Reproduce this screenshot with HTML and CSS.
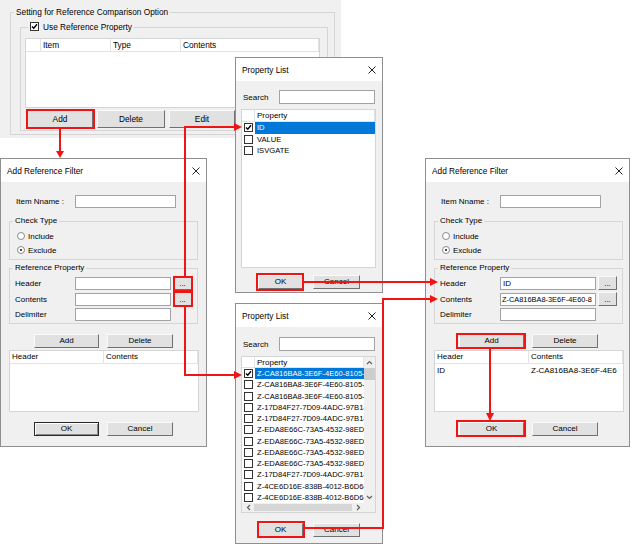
FILE: index.html
```html
<!DOCTYPE html>
<html lang="en">
<head>
  <meta charset="UTF-8">
  <meta name="viewport" content="width=device-width, initial-scale=1">
  <title>Reference Filter</title>
  <link rel="stylesheet" href="styles.css">
</head>
<body>

<div class="canvas">

  <!-- option page behind the dialogs -->
  <div class="panel">
    <fieldset class="group outer">
      <legend>Setting for Reference Comparison Option</legend>
      <fieldset class="group inner">
        <legend><span class="cb"><svg viewBox="0 0 7 7"><path d="M1 3.4 L2.8 5.3 L6 1.3"/></svg></span>Use Reference Property</legend>
        <div class="list ref-list">
          <div class="list-head">
            <span class="hc blank"></span>
            <span class="hc col-item">Item</span>
            <span class="hc col-type">Type</span>
            <span class="hc grow">Contents</span>
          </div>
        </div>
        <div class="panel-btns">
          <button class="btn">Add</button>
          <button class="btn wide">Delete</button>
          <button class="btn">Edit</button>
        </div>
      </fieldset>
    </fieldset>
  </div>

  <!-- Add Reference Filter (empty) -->
  <div class="win filter filter-left">
    <div class="titlebar"><span>Add Reference Filter</span><svg class="x" viewBox="0 0 8 8"><path d="M0.5 0.5L7.5 7.5M7.5 0.5L0.5 7.5"/></svg></div>
    <div class="filter-body">
      <div class="name-row"><span class="lbl">Item Nname :</span><span class="input"></span></div>
      <fieldset class="group check-type">
        <legend>Check Type</legend>
        <div class="radio-row"><span class="radio"></span>Include</div>
        <div class="radio-row"><span class="radio on"></span>Exclude</div>
      </fieldset>
      <fieldset class="group ref-prop">
        <legend>Reference Property</legend>
        <div class="field-row"><span class="lbl">Header</span><span class="input"></span><button class="btn dots">...</button></div>
        <div class="field-row"><span class="lbl">Contents</span><span class="input"></span><button class="btn dots">...</button></div>
        <div class="field-row last"><span class="lbl">Delimiter</span><span class="input"></span></div>
      </fieldset>
      <div class="dlg-btns"><button class="btn">Add</button><button class="btn">Delete</button></div>
      <div class="list filter-list">
        <div class="list-head"><span class="hc col-header">Header</span><span class="hc grow">Contents</span></div>
      </div>
      <div class="dlg-btns ok-row"><button class="btn default">OK</button><button class="btn">Cancel</button></div>
    </div>
  </div>

  <!-- Property List for Header -->
  <div class="win plist plist-1">
    <div class="titlebar"><span>Property List</span><svg class="x" viewBox="0 0 8 8"><path d="M0.5 0.5L7.5 7.5M7.5 0.5L0.5 7.5"/></svg></div>
    <div class="pl-body">
      <div class="search-row"><span class="lbl">Search</span><span class="input"></span></div>
      <div class="list prop-list">
        <div class="list-head"><span class="hc chk"></span><span class="hc grow">Property</span></div>
        <div class="item sel"><span class="cell-cb"><span class="cb"><svg viewBox="0 0 7 7"><path d="M1 3.4 L2.8 5.3 L6 1.3"/></svg></span></span><span class="txt">ID</span></div>
        <div class="item"><span class="cell-cb"><span class="cb"></span></span><span class="txt">VALUE</span></div>
        <div class="item"><span class="cell-cb"><span class="cb"></span></span><span class="txt">ISVGATE</span></div>
      </div>
      <div class="pl-btns"><button class="btn">OK</button><button class="btn">Cancel</button></div>
    </div>
  </div>

  <!-- Property List for Contents -->
  <div class="win plist plist-2">
    <div class="titlebar"><span>Property List</span><svg class="x" viewBox="0 0 8 8"><path d="M0.5 0.5L7.5 7.5M7.5 0.5L0.5 7.5"/></svg></div>
    <div class="pl-body">
      <div class="search-row"><span class="lbl">Search</span><span class="input"></span></div>
      <div class="list prop-list scroll">
        <div class="list-head"><span class="hc chk"></span><span class="hc grow">Property</span></div>
        <div class="vscroll">
          <span class="arr"><svg viewBox="0 0 7 5"><path d="M1 4L3.5 1.5L6 4"/></svg></span>
          <span class="thumb"></span>
          <span class="track"></span>
          <span class="arr"><svg viewBox="0 0 7 5"><path d="M1 1L3.5 3.5L6 1"/></svg></span>
        </div>
        <div class="rows">
          <div class="item sel"><span class="cell-cb"><span class="cb"><svg viewBox="0 0 7 7"><path d="M1 3.4 L2.8 5.3 L6 1.3"/></svg></span></span><span class="txt">Z-CA816BA8-3E6F-4E60-8105-7</span></div>
          <div class="item"><span class="cell-cb"><span class="cb"></span></span><span class="txt">Z-CA816BA8-3E6F-4E60-8105-7</span></div>
          <div class="item"><span class="cell-cb"><span class="cb"></span></span><span class="txt">Z-CA816BA8-3E6F-4E60-8105-7</span></div>
          <div class="item"><span class="cell-cb"><span class="cb"></span></span><span class="txt">Z-17D84F27-7D09-4ADC-97B1-A</span></div>
          <div class="item"><span class="cell-cb"><span class="cb"></span></span><span class="txt">Z-17D84F27-7D09-4ADC-97B1-A</span></div>
          <div class="item"><span class="cell-cb"><span class="cb"></span></span><span class="txt">Z-EDA8E66C-73A5-4532-98ED-0</span></div>
          <div class="item"><span class="cell-cb"><span class="cb"></span></span><span class="txt">Z-EDA8E66C-73A5-4532-98ED-0</span></div>
          <div class="item"><span class="cell-cb"><span class="cb"></span></span><span class="txt">Z-EDA8E66C-73A5-4532-98ED-0</span></div>
          <div class="item"><span class="cell-cb"><span class="cb"></span></span><span class="txt">Z-EDA8E66C-73A5-4532-98ED-0</span></div>
          <div class="item"><span class="cell-cb"><span class="cb"></span></span><span class="txt">Z-17D84F27-7D09-4ADC-97B1-A</span></div>
          <div class="item"><span class="cell-cb"><span class="cb"></span></span><span class="txt">Z-4CE6D16E-838B-4012-B6D6-7</span></div>
          <div class="item"><span class="cell-cb"><span class="cb"></span></span><span class="txt">Z-4CE6D16E-838B-4012-B6D6-7</span></div>
        </div>
        <div class="hscroll">
          <span class="arr"><svg viewBox="0 0 5 7"><path d="M4 1L1.5 3.5L4 6"/></svg></span>
          <span class="thumb"></span>
          <span class="arr"><svg viewBox="0 0 5 7"><path d="M1 1L3.5 3.5L1 6"/></svg></span>
        </div>
        <div class="corner"></div>
      </div>
      <div class="pl-btns"><button class="btn">OK</button><button class="btn">Cancel</button></div>
    </div>
  </div>

  <!-- Add Reference Filter (filled) -->
  <div class="win filter filter-right">
    <div class="titlebar"><span>Add Reference Filter</span><svg class="x" viewBox="0 0 8 8"><path d="M0.5 0.5L7.5 7.5M7.5 0.5L0.5 7.5"/></svg></div>
    <div class="filter-body">
      <div class="name-row"><span class="lbl">Item Nname :</span><span class="input"></span></div>
      <fieldset class="group check-type">
        <legend>Check Type</legend>
        <div class="radio-row"><span class="radio"></span>Include</div>
        <div class="radio-row"><span class="radio on"></span>Exclude</div>
      </fieldset>
      <fieldset class="group ref-prop">
        <legend>Reference Property</legend>
        <div class="field-row"><span class="lbl">Header</span><span class="input">ID</span><button class="btn dots">...</button></div>
        <div class="field-row"><span class="lbl">Contents</span><span class="input value">Z-CA816BA8-3E6F-4E60-8</span><button class="btn dots">...</button></div>
        <div class="field-row last"><span class="lbl">Delimiter</span><span class="input"></span></div>
      </fieldset>
      <div class="dlg-btns"><button class="btn">Add</button><button class="btn">Delete</button></div>
      <div class="list filter-list">
        <div class="list-head"><span class="hc col-header">Header</span><span class="hc grow">Contents</span></div>
        <div class="filter-row"><span class="col-header">ID</span><span class="grow">Z-CA816BA8-3E6F-4E6</span></div>
      </div>
      <div class="dlg-btns ok-row"><button class="btn">OK</button><button class="btn">Cancel</button></div>
    </div>
  </div>

  <!-- red call-outs -->
  <svg class="arrows" width="632" height="545" viewBox="0 0 632 545">
    <g fill="none" stroke="#f01414" stroke-width="2">
      <rect x="27" y="110" width="67" height="18"/>
      <rect x="174" y="277" width="18" height="14"/>
      <rect x="174" y="292" width="18" height="14"/>
      <rect x="257" y="274" width="46" height="16"/>
      <rect x="258" y="522" width="46" height="15"/>
      <rect x="457" y="334" width="68" height="14"/>
      <rect x="457" y="421" width="68" height="15"/>
      <polyline points="60,129 60,152"/>
      <polyline points="185,277 185,127 235,127"/>
      <polyline points="185,306 185,375 235,375"/>
      <polyline points="303,282 431,282"/>
      <polyline points="304,528 383,528 383,299 431,299"/>
      <polyline points="490,348 490,414"/>
    </g>
    <g fill="#f01414">
      <polygon points="56,151 64,151 60,158"/>
      <polygon points="234,123 234,131 242,127"/>
      <polygon points="234,371 234,379 242,375"/>
      <polygon points="430,278 430,286 438,282"/>
      <polygon points="430,295 430,303 438,299"/>
      <polygon points="486,413 494,413 490,421"/>
    </g>
  </svg>

</div>

</body>
</html>
```

FILE: styles.css
```css
* {
  box-sizing: border-box;
}

body {
  margin: 0;
  background: #fff;
  font-family: "Liberation Sans", Arial, sans-serif;
  font-size: 8px;
  color: #000;
}

.canvas {
  position: relative;
  width: 632px;
  height: 545px;
  overflow: hidden;
  background: #fff;
}

/* common controls */
fieldset.group {
  margin: 0;
  padding: 0;
  min-width: 0;
  border: 1px solid #d5d5d5;
}

fieldset.group legend {
  margin-left: 3px;
  padding: 0 2px;
  line-height: 10px;
}

.input {
  display: block;
  height: 13px;
  padding: 0 2px;
  background: #fff;
  border: 1px solid #a3a3a3;
  line-height: 11px;
  white-space: nowrap;
  overflow: hidden;
}

.input.value {
  padding-left: 1px;
  font-size: 7.4px;
}

.btn {
  display: block;
  height: 14px;
  padding: 0;
  font: inherit;
  color: #000;
  background: #e1e1e1;
  border: 1px solid;
  border-color: #fafafa #707070 #707070 #fafafa;
  line-height: 12px;
  text-align: center;
}

.btn.default {
  border-color: #2a2a2a;
  box-shadow: inset 1px 1px 0 #fff, inset -1px -1px 0 #8a8a8a;
}

.cb {
  display: inline-block;
  width: 9px;
  height: 9px;
  vertical-align: middle;
  background: #fff;
  border: 1px solid #333;
}

.cb svg {
  display: block;
  width: 7px;
  height: 7px;
  fill: none;
  stroke: #000;
  stroke-width: 1.4;
}

.radio {
  position: relative;
  width: 8px;
  height: 8px;
  margin-right: 3px;
  background: #fff;
  border: 1px solid #8a8a8a;
  border-radius: 50%;
}

.radio.on::after {
  content: "";
  position: absolute;
  left: 2px;
  top: 2px;
  width: 2px;
  height: 2px;
  border-radius: 50%;
  background: #111;
}

.list {
  background: #fff;
  border: 1px solid #d5d5d5;
  overflow: hidden;
}

.list-head {
  display: flex;
  height: 13px;
  border-bottom: 1px solid #e3e3e3;
}

.hc {
  padding-left: 2px;
  line-height: 12px;
  border-right: 1px solid #e3e3e3;
  white-space: nowrap;
}

.grow {
  flex: 1;
  min-width: 0;
  overflow: hidden;
  white-space: nowrap;
}

/* windows */
.win {
  position: absolute;
  background: #f0f0f0;
  border: 1px solid #8f8f8f;
}

.titlebar {
  display: flex;
  align-items: center;
  justify-content: space-between;
  height: 23px;
  padding: 0 6px;
  background: #fff;
  font-size: 8.3px;
}

.titlebar .x {
  width: 8px;
  height: 8px;
  fill: none;
  stroke: #222;
  stroke-width: 1;
}

/* option page */
.panel {
  position: absolute;
  left: 0;
  top: 0;
  width: 341px;
  height: 138px;
  padding: 7px 0 0 10px;
  background: #f0f0f0;
  font-size: 8.3px;
}

fieldset.outer {
  width: 325px;
  height: 128px;
}

fieldset.inner {
  width: 308px;
  margin: 5px 0 0 9px;
  padding-bottom: 2px;
}

fieldset.inner legend {
  margin-left: 7px;
}

.inner legend .cb {
  margin: -2px 4px 0 0;
}

.ref-list {
  width: 295px;
  height: 70px;
  margin: 6px 0 0 4px;
}

.ref-list .blank { width: 15px; }
.ref-list .col-item { width: 70px; }
.ref-list .col-type { width: 70px; }

.panel-btns {
  display: flex;
  gap: 4px;
  margin: 2px 0 0 6px;
}

.panel-btns .btn {
  width: 66px;
  height: 18px;
  line-height: 16px;
}

.panel-btns .btn.wide {
  width: 68px;
}

/* add reference filter */
.filter {
  top: 158px;
  height: 289px;
}

.filter-left {
  left: 0;
  width: 207px;
}

.filter-right {
  left: 425px;
  width: 205px;
}

.filter-body {
  padding-left: 8px;
}

.name-row {
  display: flex;
  align-items: center;
  height: 13px;
  margin-top: 13px;
  padding-left: 7px;
}

.name-row .lbl { width: 59px; }
.name-row .input { width: 101px; }

fieldset.check-type,
fieldset.ref-prop {
  width: 189px;
  padding: 3px 0 2px;
}

fieldset.check-type {
  margin-top: 8px;
}

fieldset.ref-prop {
  margin-top: 3px;
}

.radio-row {
  display: flex;
  align-items: center;
  height: 14px;
  padding-left: 7px;
}

.field-row {
  display: flex;
  align-items: center;
  height: 14px;
  padding-left: 5px;
}

.field-row + .field-row { margin-top: 2px; }
.field-row.last { margin-top: 1px; }

.field-row .lbl { width: 60px; }
.field-row .input { width: 96px; }

.dots {
  width: 19px;
  margin-left: 2px;
  line-height: 14px;
}

.dlg-btns {
  display: flex;
  gap: 8px;
  margin-top: 10px;
  padding-left: 25px;
}

.dlg-btns .btn { width: 65px; }
.dlg-btns .btn + .btn { width: 66px; }

.filter-list {
  width: 190px;
  height: 62px;
  margin-top: 2px;
}

.filter-list .col-header {
  width: 94px;
}

.filter-row {
  display: flex;
  height: 13px;
  line-height: 13px;
}

.filter-row span {
  padding-left: 2px;
}

/* property list */
.plist {
  left: 235px;
  width: 148px;
}

.plist-1 {
  top: 57px;
  height: 236px;
}

.plist-2 {
  top: 303px;
  height: 241px;
}

.pl-body {
  padding-left: 5px;
}

.search-row {
  display: flex;
  align-items: center;
  height: 14px;
  margin-top: 9px;
  padding-left: 2px;
}

.plist-2 .search-row {
  margin-top: 10px;
}

.search-row .lbl { width: 36px; }
.search-row .input { width: 96px; height: 14px; }

.prop-list {
  width: 135px;
  margin-top: 5px;
}

.plist-1 .prop-list {
  height: 159px;
}

.prop-list .list-head {
  height: 12px;
}

.prop-list .hc {
  line-height: 11px;
}

.prop-list .hc.chk {
  width: 13px;
}

.item {
  display: flex;
  align-items: center;
  height: 11.5px;
}

.cell-cb {
  display: flex;
  justify-content: center;
  width: 13px;
}

.item .txt {
  flex: 1;
  min-width: 0;
  height: 100%;
  padding-left: 2px;
  font-size: 7.6px;
  line-height: 11.5px;
  white-space: nowrap;
  overflow: hidden;
}

.item.sel .txt {
  background: #0078d7;
  color: #fff;
}

.prop-list.scroll {
  display: grid;
  grid-template-columns: 122px 11px;
  grid-template-rows: 11px 135px 9px;
}

.scroll .list-head {
  height: 11px;
}

.scroll .item {
  height: 11.25px;
}

.scroll .item .txt {
  line-height: 11.25px;
}

.vscroll {
  grid-column: 2;
  grid-row: 1 / 3;
  display: flex;
  flex-direction: column;
  background: #f0f0f0;
}

.vscroll .arr {
  display: flex;
  align-items: center;
  justify-content: center;
  height: 11px;
}

.vscroll .arr svg {
  width: 7px;
  height: 5px;
}

.vscroll .thumb {
  height: 12px;
  background: #cdcdcd;
}

.vscroll .track {
  flex: 1;
}

.rows {
  grid-column: 1;
  grid-row: 2;
  overflow: hidden;
}

.hscroll {
  grid-column: 1;
  grid-row: 3;
  display: flex;
  align-items: center;
  background: #f0f0f0;
}

.hscroll .arr {
  display: flex;
  align-items: center;
  justify-content: center;
  width: 12px;
  height: 9px;
}

.hscroll .arr svg {
  width: 5px;
  height: 7px;
}

.hscroll .thumb {
  flex: 1;
  height: 7px;
  background: #d6d6d6;
}

.arr svg {
  fill: none;
  stroke: #606060;
  stroke-width: 1.2;
}

.corner {
  grid-column: 2;
  grid-row: 3;
  background: #f0f0f0;
}

.pl-btns {
  display: flex;
  gap: 10px;
  margin-top: 7px;
  padding-left: 17px;
}

.plist-2 .pl-btns {
  margin-top: 10px;
}

.pl-btns .btn { width: 45px; }
.pl-btns .btn + .btn { width: 47px; }

/* call-outs */
.arrows {
  position: absolute;
  left: 0;
  top: 0;
  pointer-events: none;
}
```
